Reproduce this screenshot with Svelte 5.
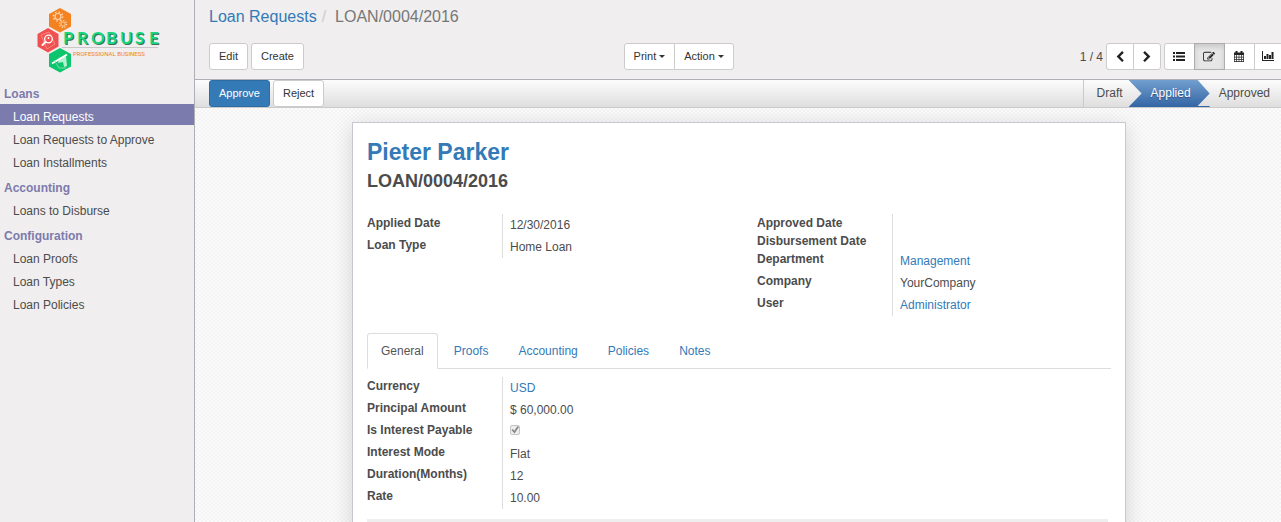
<script>
  const menu = [
    { title: 'Loans', items: ['Loan Requests', 'Loan Requests to Approve', 'Loan Installments'] },
    { title: 'Accounting', items: ['Loans to Disburse'] },
    { title: 'Configuration', items: ['Loan Proofs', 'Loan Types', 'Loan Policies'] }
  ];
  let activeItem = $state('Loan Requests');

  const tabs = ['General', 'Proofs', 'Accounting', 'Policies', 'Notes'];
  let activeTab = $state('General');

  const request = [
    { label: 'Applied Date', value: '12/30/2016' },
    { label: 'Loan Type', value: 'Home Loan' }
  ];
  const approval = [
    { label: 'Approved Date' },
    { label: 'Disbursement Date' },
    { label: 'Department', value: 'Management', link: true },
    { label: 'Company', value: 'YourCompany' },
    { label: 'User', value: 'Administrator', link: true }
  ];
  const terms = [
    { label: 'Currency', value: 'USD', link: true },
    { label: 'Principal Amount', value: '$ 60,000.00' },
    { label: 'Is Interest Payable', checked: true, id: 'interest-payable' },
    { label: 'Interest Mode', value: 'Flat' },
    { label: 'Duration(Months)', value: '12' },
    { label: 'Rate', value: '10.00' }
  ];
</script>

{#snippet fields(rows)}
  <dl class="fields">
    {#each rows as row}
      <div class="field">
        <dt>
          {#if row.checked}<label for={row.id}>{row.label}</label>{:else}{row.label}{/if}
        </dt>
        <dd class:filled={row.value || row.checked}>
          {#if row.checked}
            <input type="checkbox" id={row.id} checked disabled />
          {:else if row.link}
            <a href="#record">{row.value}</a>
          {:else if row.value}
            {row.value}
          {/if}
        </dd>
      </div>
    {/each}
  </dl>
{/snippet}

<div class="app">
  <aside>
    <a class="logo" href="#home" aria-label="Probuse">
      <svg width="130" height="70" viewBox="34 5 130 70">
        <path fill="#f58220" d="M60 8l11 6v12.500l-11 6-11-6V14z" />
        <g fill="none" stroke="#fbd3ab">
          <circle cx="58" cy="16.500" r="3" stroke-width="1.200" />
          <circle cx="58" cy="16.500" r="4.600" stroke-width="1.500" stroke-dasharray="1.600 2" />
          <circle cx="63" cy="24" r="2.200" />
          <circle cx="63" cy="24" r="3.600" stroke-width="1.200" stroke-dasharray="1.300 1.500" />
        </g>
        <path fill="#f0504f" d="M48 28l10.500 6v12.500l-10.500 6-10.500-6V34z" />
        <path fill="none" stroke="#f79693" stroke-width=".8" d="M41 35l8-3 6 12-8 5z" />
        <circle cx="48.500" cy="39" r="3.800" fill="#f0504f" stroke="#fff" stroke-width="1.300" />
        <path stroke="#fff" stroke-width="2" stroke-linecap="round" d="M45.500 42l-3 3" />
        <circle cx="48.500" cy="38" r="1" fill="#fff" />
        <path fill="#0cc56c" d="M60 48l11 6v12.500l-11 6-11-6V54z" />
        <path fill="#b6f0d2" d="M59 58l7-2 1 10-3 1-1-5-5 1z" />
        <path stroke="#fff" stroke-width="2" d="M52 63.500l15-9" />
        <path fill="none" stroke="#74dfa8" d="M54 60l5 8h7" />
        <g class="brand">
          <text fill="#3f6f58" x="64 78 92 107 121 136 150" y="45">PROBUSE</text>
          <text fill="#18d77e" x="63 77 91 106 120 135 149" y="44">PROBUSE</text>
        </g>
        <path stroke="#c9c7c7" d="M62 47.500h96" />
        <text class="motto" x="73" y="56">PROFESSIONAL BUSINESS</text>
      </svg>
    </a>
    <nav class="menu">
      {#each menu as group}
        <section>
          <h4>{group.title}</h4>
          {#each group.items as item}
            <a href="#menu" class:current={item === activeItem} onclick={() => (activeItem = item)}>{item}</a>
          {/each}
        </section>
      {/each}
    </nav>
  </aside>

  <main>
    <header>
      <nav class="crumbs">
        <a href="#requests">Loan Requests</a><span class="slash">/</span><span>LOAN/0004/2016</span>
      </nav>
      <div class="tools">
        <div class="row">
          <button>Edit</button>
          <button>Create</button>
        </div>
        <div class="joined">
          <button>Print<i class="caret"></i></button>
          <button>Action<i class="caret"></i></button>
        </div>
        <div class="row">
          <span class="pager">1 / 4</span>
          <div class="joined icons">
            <button aria-label="Previous">
              <svg viewBox="0 0 1792 1792"><path d="M1427 301l-531 531 531 531q19 19 19 45t-19 45l-166 166q-19 19-45 19t-45-19l-742-742q-19-19-19-45t19-45l742-742q19-19 45-19t45 19l166 166q19 19 19 45t-19 45z" /></svg>
            </button>
            <button aria-label="Next">
              <svg viewBox="0 0 1792 1792"><path d="M1363 877l-742 742q-19 19-45 19t-45-19l-166-166q-19-19-19-45t19-45l531-531-531-531q-19-19-19-45t19-45l166-166q19-19 45-19t45 19l742 742q19 19 19 45t-19 45z" /></svg>
            </button>
          </div>
          <div class="joined icons views">
            <button aria-label="List">
              <svg viewBox="0 0 12 12"><path d="M0 1h2v2H0zM0 4.500h2v2H0zM0 8h2v2H0zM3 1h9v2H3zM3 4.500h9v2H3zM3 8h9v2H3z" /></svg>
            </button>
            <button aria-label="Form" class="pressed">
              <svg viewBox="0 0 1792 1792"><path d="M888 1184l116-116-152-152-116 116v56h96v96h56zm440-720q-16-16-33 1l-350 350q-17 17-1 33t33-1l350-350q17-17 1-33zm80 594v190q0 119-84.500 203.500t-203.500 84.500h-832q-119 0-203.500-84.500t-84.500-203.500v-832q0-119 84.500-203.500t203.500-84.500h832q63 0 117 25 15 7 18 23 3 17-9 29l-49 49q-14 14-32 8-23-6-45-6h-832q-66 0-113 47t-47 113v832q0 66 47 113t113 47h832q66 0 113-47t47-113v-126q0-13 9-22l64-64q15-15 35-7t20 29zm-96-738l288 288-672 672h-288v-288zm444 132l-92 92-288-288 92-92q28-28 68-28t68 28l152 152q28 28 28 68t-28 68z" /></svg>
            </button>
            <button aria-label="Calendar">
              <svg viewBox="0 0 12 12"><path fill-rule="evenodd" d="M1 1.500h1.500V0h2v1.500h3V0h2v1.500H11V11H1zM1.700 4v1.800h1.600V4zm2.300 0v1.800h1.700V4zm2.300 0v1.800H8V4zm2.400 0v1.800h1.600V4zM1.700 6.400v1.700h1.600V6.400zm2.300 0v1.700h1.700V6.400zm2.300 0v1.700H8V6.400zm2.400 0v1.700h1.600V6.400zM1.700 8.700v1.600h1.600V8.700zm2.300 0v1.600h1.700V8.700zm2.300 0v1.600H8V8.700zm2.400 0v1.600h1.600V8.700z" /></svg>
            </button>
            <button aria-label="Graph">
              <svg viewBox="0 0 12 12"><path d="M0 0h1v9h11v1H0zM2 5h2v3H2zM4.500 3h2v5h-2zM7 4h2v4H7zM9.500 1h2v7h-2z" /></svg>
            </button>
          </div>
        </div>
      </div>
    </header>

    <div class="statusbar">
      <div class="row">
        <button class="primary">Approve</button>
        <button>Reject</button>
      </div>
      <ol class="stages">
        <li>Draft</li>
        <li class="current" aria-current="step">Applied</li>
        <li>Approved</li>
      </ol>
    </div>

    <div class="canvas">
      <article class="sheet">
        <h1><a href="#employee">Pieter Parker</a></h1>
        <h2>LOAN/0004/2016</h2>
        <div class="groups">
          {@render fields(request)}
          {@render fields(approval)}
        </div>
        <div class="tabs" role="tablist">
          {#each tabs as tab}
            <button role="tab" aria-selected={tab === activeTab} onclick={() => (activeTab = tab)}>{tab}</button>
          {/each}
        </div>
        <div class="groups">
          {@render fields(terms)}
        </div>
        <div class="lines"></div>
      </article>
    </div>
  </main>
</div>

<style>
  :global(body) {
    margin: 0;
  }
  .app {
    display: flex;
    height: 100vh;
    overflow: hidden;
    font-family: 'Liberation Sans', Arial, sans-serif;
    font-size: 12px;
    color: #4c4c4c;
    background: #f0eeee;
  }
  a {
    color: #337ab7;
    text-decoration: none;
  }
  aside {
    flex: none;
    width: 194px;
    border-right: 1px solid #afafb6;
  }
  .logo {
    display: block;
    padding: 5px 0 8px 34px;
  }
  .logo svg {
    display: block;
  }
  .brand {
    font: bold 17px Lato, sans-serif;
  }
  .motto {
    font: 6px Roboto, sans-serif;
    fill: #f58220;
  }
  .menu {
    display: grid;
    gap: 4px;
  }
  h4 {
    margin: 0;
    padding: 1px 0 0 4px;
    font-size: 12px;
    line-height: 20px;
    color: #7c7bad;
  }
  .menu a {
    display: block;
    margin-bottom: 2px;
    padding: 5px 0 0 13px;
    line-height: 16px;
    color: #4c4c4c;
  }
  .menu a.current {
    background: #7c7bad;
    color: #fff;
  }
  main {
    flex: 1;
    min-width: 0;
    display: flex;
    flex-direction: column;
  }
  header {
    flex: none;
    padding: 0 0 9px 14px;
    border-bottom: 1px solid #afafb6;
  }
  .crumbs {
    padding: 6px 0 16px;
    font-size: 16px;
    line-height: 21px;
    color: #777;
  }
  .slash {
    padding: 0 9px 0 5px;
    color: #ccc;
  }
  .tools {
    display: grid;
    grid-template-columns: 10fr 11fr auto;
  }
  .row {
    display: flex;
    align-items: center;
    gap: 3px;
  }
  .joined {
    display: flex;
  }
  button {
    height: 27px;
    padding: 0 9px 2px;
    border: 1px solid #ccc;
    border-radius: 3px;
    background: #fff;
    color: #333;
    font-family: inherit;
    font-size: 11px;
  }
  .joined button + button {
    margin-left: -1px;
    border-top-left-radius: 0;
    border-bottom-left-radius: 0;
  }
  .joined button:not(:last-child) {
    border-top-right-radius: 0;
    border-bottom-right-radius: 0;
  }
  .caret {
    display: inline-block;
    margin-left: 3px;
    border: 3px solid transparent;
    border-top-color: #333;
    border-bottom: 0;
    vertical-align: middle;
  }
  .icons button {
    width: 28px;
    padding: 0;
  }
  .views button {
    width: 31px;
  }
  .views button:last-child {
    width: 27px;
    border-right: 0;
    border-radius: 0;
  }
  .icons svg {
    display: block;
    width: 12px;
    height: 12px;
    margin: 0 auto;
    fill: #222;
  }
  .icons .pressed {
    position: relative;
    background: #e6e6e6;
    border-color: #adadad;
    box-shadow: inset 0 3px 5px rgba(0, 0, 0, 0.125);
  }
  .statusbar {
    flex: none;
    display: flex;
    justify-content: space-between;
    padding-left: 14px;
    border-bottom: 1px solid #cacaca;
    background: linear-gradient(#fcfcfc, #dedede);
  }
  .primary {
    background: #337ab7;
    border-color: #2e6da4;
    color: #fff;
  }
  .stages {
    display: flex;
    margin: 0;
    padding: 0;
    list-style: none;
    line-height: 27px;
    border-left: 1px solid #cacaca;
  }
  .stages li {
    padding: 0 11px 0 9px;
  }
  .stages li:first-child {
    padding: 0 6px 0 13px;
  }
  .stages .current {
    padding: 0 19px 0 22px;
    background: linear-gradient(#729fcf, #3465a4);
    color: #fff;
    text-shadow: 0 1px 1px #2a4d80;
    clip-path: polygon(0 0, calc(100% - 12px) 0, 100% 50%, calc(100% - 12px) 96%, 100% 96%, 100% 100%, 0 100%, 13px 50%);
  }
  .canvas {
    flex: 1;
    min-height: 0;
    overflow: hidden;
    padding: 14px 15px 0 17px;
    background: repeating-conic-gradient(#f4f4f4 0 25%, #fbfbfb 0 50%) 0 0 / 4px 4px;
  }
  .sheet {
    box-sizing: border-box;
    max-width: 774px;
    min-height: 100%;
    margin: 0 auto;
    padding: 14px;
    border: 1px solid #c8c8d3;
    background: #fff;
    box-shadow: 0 4px 20px rgba(0, 0, 0, 0.15);
  }
  h1,
  h2 {
    margin: 0;
    font-size: 23px;
    line-height: 30px;
  }
  h2 {
    margin-bottom: 19px;
    font-size: 18px;
    line-height: 28px;
  }
  .groups {
    display: grid;
    grid-template-columns: 1fr 1fr;
    gap: 36px;
    align-items: start;
  }
  .fields {
    margin: 0;
  }
  .field {
    display: grid;
    grid-template-columns: 135px 1fr;
  }
  dt {
    font-weight: bold;
    line-height: 18px;
  }
  dd {
    margin: 0;
    padding-left: 7px;
    border-left: 1px solid #ddd;
  }
  dd.filled {
    height: 22px;
    line-height: 22px;
  }
  input {
    appearance: none;
    display: block;
    box-sizing: border-box;
    width: 10px;
    height: 10px;
    margin: 4px 0 0;
    border: 1px solid #c6c6c6;
    border-radius: 2px;
    background: #eee;
  }
  input:checked::before {
    content: '';
    display: block;
    width: 8px;
    height: 8px;
    background: #888;
    clip-path: polygon(6% 50%, 24% 36%, 40% 58%, 82% 0, 100% 14%, 44% 94%);
  }
  .tabs {
    display: flex;
    gap: 2px;
    margin: 17px 0 8px;
    border-bottom: 1px solid #ddd;
  }
  .tabs button {
    height: 36px;
    margin-bottom: -1px;
    padding: 0 13px;
    border-color: transparent;
    border-radius: 3px 3px 0 0;
    background: none;
    color: #337ab7;
    font-size: 12px;
  }
  .tabs button[aria-selected='true'] {
    border-color: #ddd #ddd #fff;
    background: #fff;
    color: #555;
  }
  .lines {
    height: 24px;
    margin: 10px 3px 0 0;
    background: #eee;
  }
</style>
